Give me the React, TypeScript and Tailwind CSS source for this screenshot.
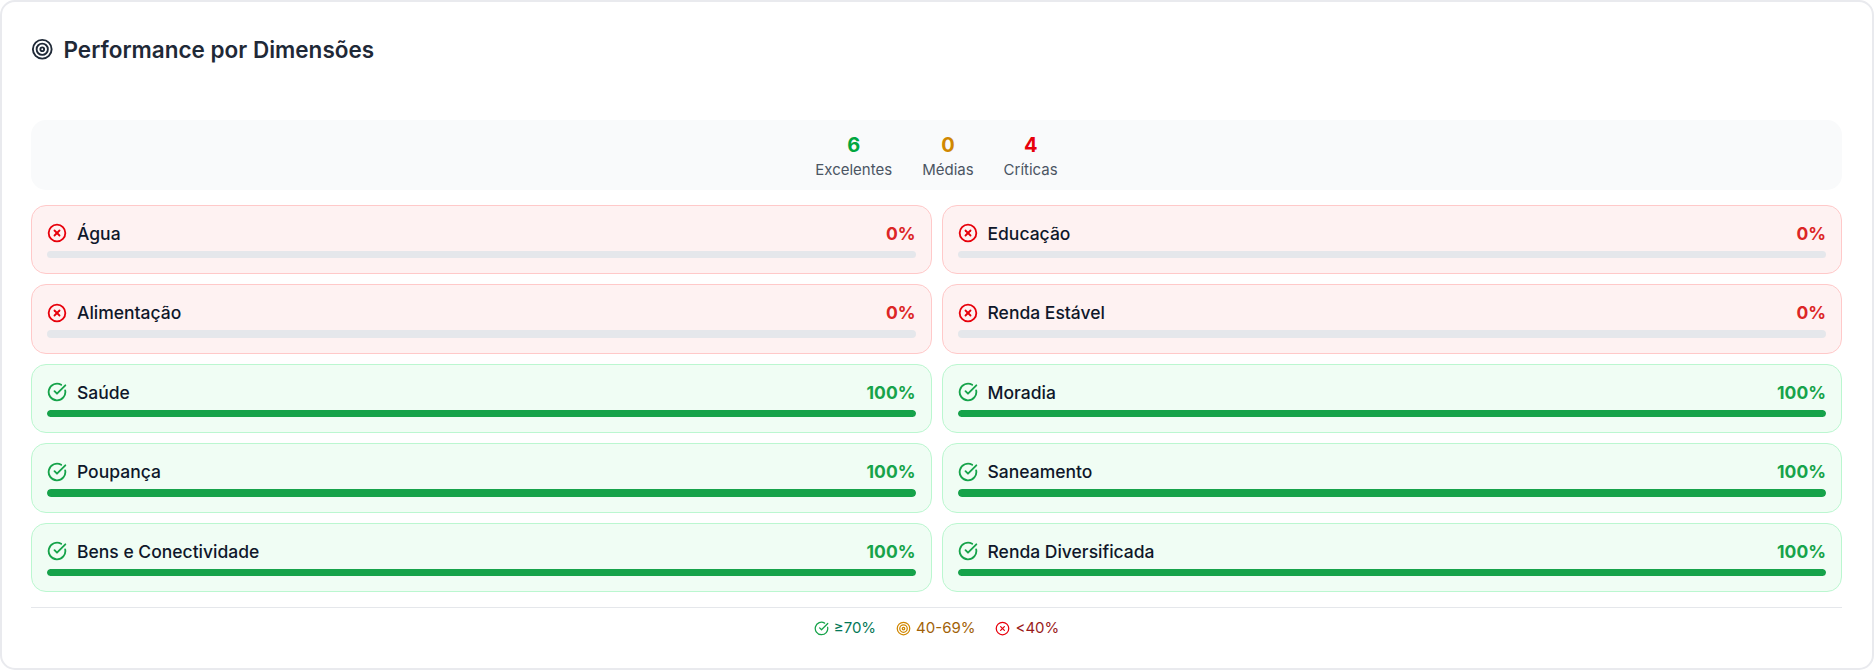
import { Target, CircleCheckBig, CircleX } from "lucide-react";

type Item = { name: string; value: number };

const left: Item[] = [
  { name: "Água", value: 0 },
  { name: "Alimentação", value: 0 },
  { name: "Saúde", value: 100 },
  { name: "Poupança", value: 100 },
  { name: "Bens e Conectividade", value: 100 },
];
const right: Item[] = [
  { name: "Educação", value: 0 },
  { name: "Renda Estável", value: 0 },
  { name: "Moradia", value: 100 },
  { name: "Saneamento", value: 100 },
  { name: "Renda Diversificada", value: 100 },
];

function Row({ item }: { item: Item }) {
  const good = item.value >= 70;
  return (
    <div
      className={`rounded-[15px] border p-[15px] ${
        good ? "border-[#bbf7d0] bg-[#f0fdf4]" : "border-[#ffc9c9] bg-[#fef2f2]"
      }`}
    >
      <div className="mb-[5px] flex h-[25px] items-center justify-between">
        <div className="flex items-center gap-[10px]">
          {good ? (
            <CircleCheckBig className="mb-[0.5px] h-[20px] w-[20px] text-[#16a34a]" strokeWidth={2.2} />
          ) : (
            <CircleX className="mb-[0.5px] h-[20px] w-[20px] text-[#e7000b]" strokeWidth={2.2} />
          )}
          <span className="text-[17.5px] font-medium leading-[25px] text-[#0f172a]">{item.name}</span>
        </div>
        <span className={`text-[17.5px] font-bold leading-[25px] ${good ? "text-[#16a34a]" : "text-[#dc2626]"}`}>
          {item.value}%
        </span>
      </div>
      <div className="h-[7.5px] overflow-hidden rounded-full bg-[#e5e7eb]">
        <div className="h-full rounded-full bg-[#16a34a]" style={{ width: `${item.value}%` }} />
      </div>
    </div>
  );
}

function Stat({ value, label, color }: { value: string; label: string; color: string }) {
  return (
    <div className="flex flex-col items-center">
      <span className={`text-[20px] font-bold leading-[30px] ${color}`}>{value}</span>
      <span className="text-[15px] leading-[20px] text-[#4b5563]">{label}</span>
    </div>
  );
}

export default function App() {
  return (
    <div className="h-[670px] w-[1874px] bg-white font-['Inter',sans-serif]">
      <div className="flex h-[670px] flex-col rounded-[15px] border-2 border-[#e9eaee] bg-white pl-[29px] pr-[30px] pt-[30px]">
        <div className="flex h-[35px] items-center gap-[10px]">
          <Target className="h-[22.5px] w-[22.5px] text-[#1f2937]" />
          <h2 className="text-[22.5px] font-semibold leading-[35px] text-[#1f2937]">Performance por Dimensões</h2>
        </div>
        <div className="mt-[53px] flex items-center justify-center gap-[30px] rounded-[15px] bg-[#f9fafb] py-[10px]">
          <Stat value="6" label="Excelentes" color="text-[#00a63e]" />
          <Stat value="0" label="Médias" color="text-[#d08700]" />
          <Stat value="4" label="Críticas" color="text-[#e7000b]" />
        </div>
        <div className="mt-[14.75px] grid grid-cols-2 gap-[10px]">
          {left.map((item, i) => (
            <div key={item.name} className="contents">
              <Row item={item} />
              <Row item={right[i]} />
            </div>
          ))}
        </div>
        <div className="mt-[15px] flex items-center justify-center gap-[20px] border-t border-[#e5e7eb] pt-[10px] text-[15px] leading-[20px]">
          <div className="flex items-center gap-[5px] text-[#047857]">
            <CircleCheckBig className="h-[15px] w-[15px] text-[#16a34a]" />
            <span>≥70%</span>
          </div>
          <div className="flex items-center gap-[5px] text-[#a16207]">
            <Target className="h-[15px] w-[15px] text-[#d08700]" />
            <span>40-69%</span>
          </div>
          <div className="flex items-center gap-[5px] text-[#991b1b]">
            <CircleX className="h-[15px] w-[15px] text-[#e7000b]" />
            <span>&lt;40%</span>
          </div>
        </div>
      </div>
    </div>
  );
}
